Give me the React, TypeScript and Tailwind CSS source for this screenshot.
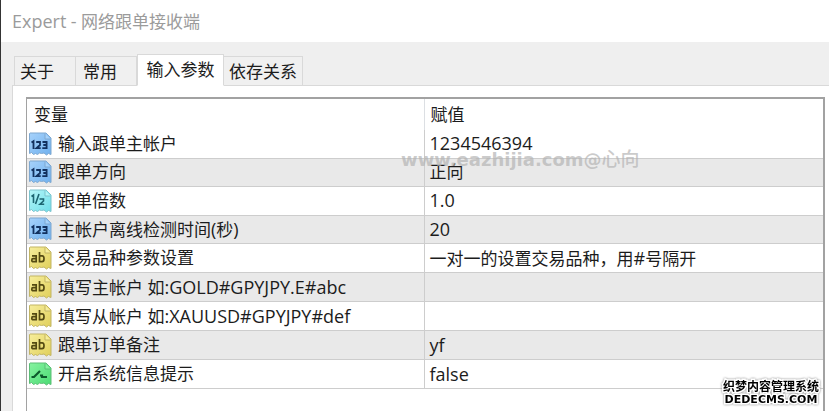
import { useState } from 'react'

type Kind = 'int' | 'double' | 'string' | 'bool'

const palette = {
  int: { from: '#a6d2fb', to: '#6fb0ee', edge: '#7fa8d0', ink: '#12315f' },
  double: { from: '#b4f6f8', to: '#6fdeea', edge: '#7cc3cd', ink: '#1d6672' },
  string: { from: '#f7ee9c', to: '#e0cf5a', edge: '#c2b565', ink: '#544a12' },
  bool: { from: '#86f3a0', to: '#4bdb74', edge: '#5dbd77', ink: '#0d5a2c' },
}

const rows: { kind: Kind; name: string; value: string }[] = [
  { kind: 'int', name: '输入跟单主帐户', value: '1234546394' },
  { kind: 'int', name: '跟单方向', value: '正向' },
  { kind: 'double', name: '跟单倍数', value: '1.0' },
  { kind: 'int', name: '主帐户离线检测时间(秒)', value: '20' },
  { kind: 'string', name: '交易品种参数设置', value: '一对一的设置交易品种，用#号隔开' },
  { kind: 'string', name: '填写主帐户 如:GOLD#GPYJPY.E#abc', value: '' },
  { kind: 'string', name: '填写从帐户 如:XAUUSD#GPYJPY#def', value: '' },
  { kind: 'string', name: '跟单订单备注', value: 'yf' },
  { kind: 'bool', name: '开启系统信息提示', value: 'false' },
]

const tabs = [
  { label: '关于', size: 'w-[62px] pr-4' },
  { label: '常用', size: 'w-[61px] pr-3' },
  { label: '输入参数', size: 'w-[87px]' },
  { label: '依存关系', size: 'w-[79px]' },
]

// Latin runs are set one size up so they sit level with the Chinese
function Mixed({ text }: { text: string }) {
  return (
    <span>
      {text.split(/([\x21-\x7e]+)/).map((part, i) =>
        i % 2 ? <span key={i} className="text-lg leading-6">{part}</span> : part
      )}
    </span>
  )
}

function TypeIcon({ kind }: { kind: Kind }) {
  const c = palette[kind]
  const id = `fill-${kind}`
  return (
    <svg width="24" height="24" viewBox="0 0 24 24" className="shrink-0" aria-hidden="true">
      <defs>
        <linearGradient id={id} x1="0" y1="0" x2="1" y2="1">
          <stop offset="0" stopColor={c.from} />
          <stop offset="1" stopColor={c.to} />
        </linearGradient>
      </defs>
      <path
        d="M2 1H18L23 6V22.5L20.5 21.5L18.5 23L16 21L13.5 21.5L11.5 21L9.5 22.5L7.5 21.5L5.5 22.5L3.5 20.5L1.5 21.5V1.5Z"
        fill={`url(#${id})`}
        stroke={c.edge}
        strokeWidth="1"
        strokeLinejoin="round"
      />
      <path d="M17 1.5V7H22.5" fill={c.from} stroke={c.edge} strokeWidth="1" strokeLinejoin="round" />
      <g fill="none" stroke={c.ink} strokeWidth="1.8">
        {kind === 'int' && (
          <path d="M3.5 10.5L5.5 9.2V17M8.2 10H12V13L8.5 16.2H12.7M14.5 10H18.6V16.2H14.3M15.3 13H18.6" />
        )}
        {kind === 'double' && (
          <path d="M3.5 7.5L5.5 6V14M11 5L7.5 15M11.5 10H15.5V12L12 15.2H16.2" strokeWidth="1.6" />
        )}
        {kind === 'string' && (
          <path d="M4 9.8H8.2V16.5M8.2 12.6H5Q3.8 12.6 3.8 14.2T5.3 15.7H8.2M11.5 6V15.7H14Q16 15.7 16 12.7T14 9.8H11.5" strokeWidth="1.7" />
        )}
        {kind === 'bool' && <path d="M3.5 15H6L12 9M12 13.5H14V15H19" strokeWidth="2.2" />}
      </g>
    </svg>
  )
}

export default function App() {
  const [active, setActive] = useState(2)
  return (
    <div className="relative flex h-screen flex-col overflow-hidden border-l border-[#343434] bg-[#efefef] font-['Open_Sans','Noto_Sans_CJK_SC',sans-serif] text-[17px] leading-6 text-[#1c1c1c]">
      <header className="h-[42px] shrink-0 bg-white px-[11px] pt-[9px] text-[#9b9b9b]">
        <h1><Mixed text="Expert - 网络跟单接收端" /></h1>
      </header>

      <div role="tablist" className="relative z-10 -mb-px flex h-11 shrink-0 items-end pl-[13px]">
        {tabs.map((t, i) => (
          <button
            key={t.label}
            role="tab"
            aria-selected={active === i}
            onClick={() => setActive(i)}
            className={`${t.size} border border-[#d9d9d9] text-center whitespace-nowrap ${
              active === i ? 'h-8 border-b-white bg-white pb-px' : 'h-[30px] border-l-0 bg-[#f0f0f0] pt-px first:border-l'
            }`}
          >
            {t.label}
          </button>
        ))}
      </div>

      <main className="ml-[11px] flex min-h-0 flex-1 flex-col border-t border-l border-[#d9d9d9] bg-white pt-[11px] pr-1 pl-[13px]">
        <div className="flex-1 border-2 border-b-0 border-l border-[#a2a2a2]">
          <table className="h-[290px] w-full table-fixed border-collapse">
            <thead>
              <tr className="h-[31px] text-left">
                <th className="w-[397px] border-r border-[#dcdfe3] pl-[7px] font-normal">变量</th>
                <th className="pl-[6px] font-normal">赋值</th>
              </tr>
            </thead>
            <tbody>
              {rows.map((r) => (
                <tr key={r.name} className="border-b border-[#cdcdcd] even:bg-[#e9e9e9]">
                  <td className="border-r border-[#cdcdcd] p-0 pl-px">
                    <div className="flex items-center gap-[6px] whitespace-nowrap">
                      <TypeIcon kind={r.kind} />
                      <Mixed text={r.name} />
                    </div>
                  </td>
                  <td className="p-0 pl-[5px] whitespace-nowrap"><Mixed text={r.value} /></td>
                </tr>
              ))}
            </tbody>
          </table>
        </div>
      </main>

      <div className="pointer-events-none absolute top-[145px] left-[400px] z-20 font-['DejaVu_Sans','Noto_Sans_CJK_SC',sans-serif] text-lg font-bold whitespace-nowrap text-[#b4b4b4]/70">
        www.eazhijia.com@<span className="text-[19px] font-medium">心向</span>
      </div>

      <div className="absolute right-[10px] bottom-[5px] z-20 text-center font-['Noto_Sans_CJK_SC',sans-serif] text-xs leading-[14px] font-bold text-black [paint-order:stroke_fill] [-webkit-text-stroke:3px_white] drop-shadow-[0_0_1px_#888]">
        <div>织梦内容管理系统</div>
        <div className="font-['DejaVu_Sans',sans-serif] text-[11px] leading-[13px]">DEDECMS.COM</div>
      </div>
    </div>
  )
}
